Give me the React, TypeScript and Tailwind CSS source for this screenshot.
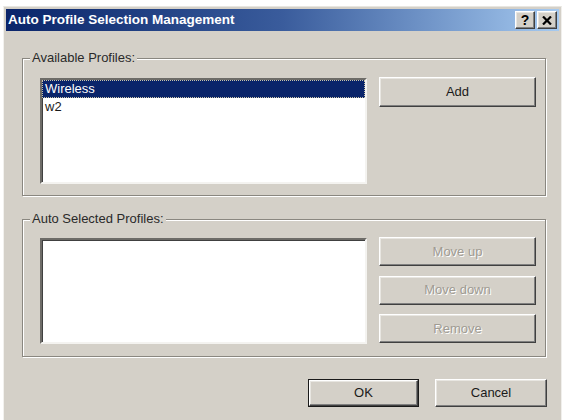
import React from "react";

const raised =
  "border border-t-[#ffffff] border-l-[#ffffff] border-r-[#404040] border-b-[#404040] shadow-[inset_-1px_-1px_0_#808080,inset_1px_1px_0_#e8e6e1] bg-[#d4d0c8]";

function Btn({
  label,
  w,
  h,
  disabled,
  isDefault,
}: {
  label: string;
  w: string;
  h: string;
  disabled?: boolean;
  isDefault?: boolean;
}) {
  if (isDefault) {
    return (
      <div className={`${w} ${h} border border-[#1a1a1a] flex`}>
        <div
          className={`flex-1 ${raised} flex items-center justify-center text-[13px] text-[#1a1a1a]`}
        >
          {label}
        </div>
      </div>
    );
  }
  return (
    <div
      className={`${w} ${h} ${raised} flex items-center justify-center text-[13px] ${
        disabled ? "text-[#9f9b93] [text-shadow:1px_1px_0_#ffffff]" : "text-[#1a1a1a]"
      }`}
    >
      {label}
    </div>
  );
}

function ListBox({ children }: { children?: React.ReactNode }) {
  return (
    <div className="w-[327px] h-[106px] bg-white border-2 border-t-[#6e6c68] border-l-[#6e6c68] border-r-[#f4f3f0] border-b-[#f4f3f0] shadow-[inset_1px_1px_0_#404040] flex flex-col">
      {children}
    </div>
  );
}

function Group({
  label,
  h,
  children,
  className,
}: {
  label: string;
  h: string;
  children: React.ReactNode;
  className?: string;
}) {
  return (
    <div
      className={`relative w-[524px] ${h} border border-[#8a8780] shadow-[inset_1px_1px_0_#ffffff,1px_1px_0_#ffffff] ${
        className ?? ""
      }`}
    >
      <div className="absolute left-[7px] top-[-9px] px-[2px] bg-[#d4d0c8] text-[13px] leading-[16px] text-[#2a2a2a]">
        {label}
      </div>
      {children}
    </div>
  );
}

export default function App() {
  return (
    <div className="w-[565px] h-[420px] bg-white pt-[6px] pl-[3px] overflow-hidden font-['Liberation_Sans',Arial,sans-serif]">
      <div className="w-[559px] h-[416px] bg-[#d4d0c8] border border-t-[#e8e6e1] border-l-[#f2f1ee] border-r-[#f0efec] border-b-[#808080] p-[2px] flex flex-col">
        {/* Title bar */}
        <div className="h-[22px] flex items-center bg-linear-to-r from-[#0a246a] via-[#3a5c9c] to-[#a6caf0] pl-[2px] pr-[2px]">
          <div className="flex-1 text-white font-bold text-[13.5px] leading-[16px]">
            Auto Profile Selection Management
          </div>
          <div className="flex gap-[2px]">
            <div
              className={`w-[20px] h-[18px] ${raised} flex items-center justify-center text-[14px] font-bold text-black leading-none`}
            >
              ?
            </div>
            <div
              className={`w-[20px] h-[18px] ${raised} flex items-center justify-center`}
            >
              <svg width="10" height="9" viewBox="0 0 10 9">
                <path d="M1 0.5 L9 8.5 M9 0.5 L1 8.5" stroke="#000" strokeWidth="2.2" />
              </svg>
            </div>
          </div>
        </div>

        {/* Body */}
        <div className="flex-1 flex flex-col pl-[16px] pt-[27px]">
          <Group label="Available Profiles:" h="h-[138px]">
            <div className="flex items-start pl-[17px] pt-[19px]">
              <ListBox>
                <div className="h-[18px] bg-[#0a246a] border border-dotted border-[#c9c3a8] text-white text-[13px] leading-[16px] pl-[2px]">
                  Wireless
                </div>
                <div className="h-[17px] text-[#1a1a1a] text-[13px] leading-[17px] pl-[3px]">
                  w2
                </div>
              </ListBox>
              <div className="ml-[12px] mt-[-1px]">
                <Btn label="Add" w="w-[157px]" h="h-[30px]" />
              </div>
            </div>
          </Group>

          <Group label="Auto Selected Profiles:" h="h-[138px]" className="mt-[23px]">
            <div className="flex items-start pl-[17px] pt-[18px]">
              <ListBox />
              <div className="ml-[12px] mt-[-1px] flex flex-col gap-[9.5px]">
                <Btn label="Move up" w="w-[157px]" h="h-[29px]" disabled />
                <Btn label="Move down" w="w-[157px]" h="h-[29px]" disabled />
                <Btn label="Remove" w="w-[157px]" h="h-[29px]" disabled />
              </div>
            </div>
          </Group>

          <div className="mt-[22px] flex justify-end gap-[16px] pr-[12px]">
            <Btn label="OK" w="w-[111px]" h="h-[28px]" isDefault />
            <Btn label="Cancel" w="w-[112px]" h="h-[28px]" />
          </div>
        </div>
      </div>
    </div>
  );
}
